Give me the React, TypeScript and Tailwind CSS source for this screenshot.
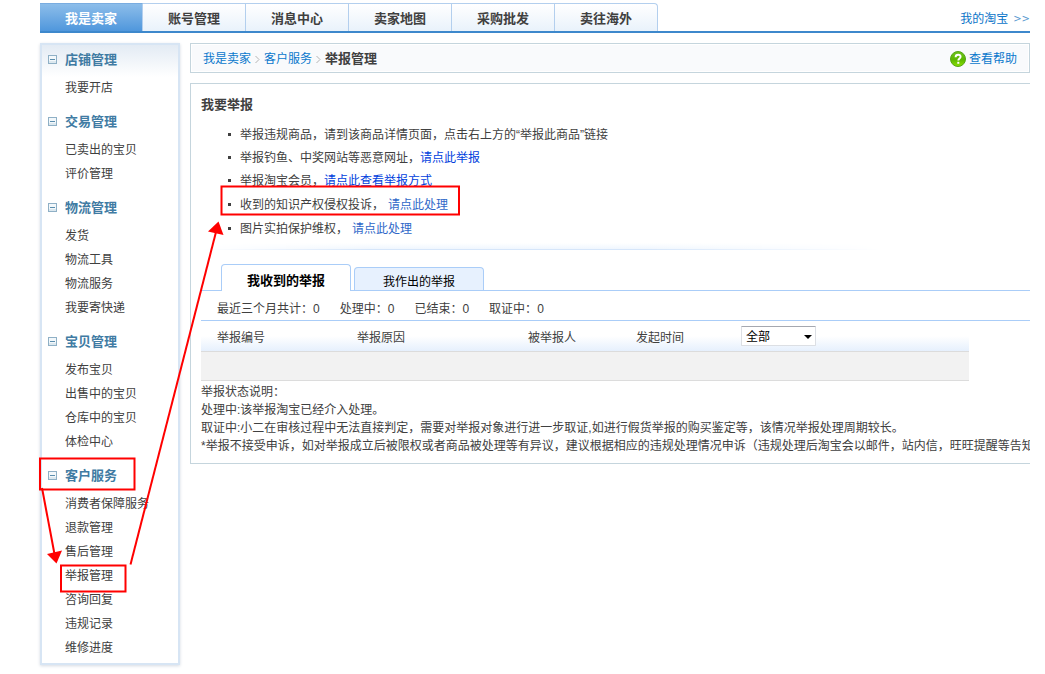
import React from "react";

const tabs = ["我是卖家", "账号管理", "消息中心", "卖家地图", "采购批发", "卖往海外"];

const menu: { title: string; items: string[] }[] = [
  { title: "店铺管理", items: ["我要开店"] },
  { title: "交易管理", items: ["已卖出的宝贝", "评价管理"] },
  { title: "物流管理", items: ["发货", "物流工具", "物流服务", "我要寄快递"] },
  { title: "宝贝管理", items: ["发布宝贝", "出售中的宝贝", "仓库中的宝贝", "体检中心"] },
  {
    title: "客户服务",
    items: ["消费者保障服务", "退款管理", "售后管理", "举报管理", "咨询回复", "违规记录", "维修进度"],
  },
];

const stats = [
  ["最近三个月共计：", "0"],
  ["处理中：", "0"],
  ["已结束：", "0"],
  ["取证中：", "0"],
];

function CollapseIcon() {
  return (
    <svg width="9" height="10" viewBox="0 0 9 10" shapeRendering="crispEdges" aria-hidden="true">
      <rect width="9" height="9" fill="#8fb0c6" />
      <rect x="1" y="1" width="7" height="7" fill="#f3f8fb" />
      <rect x="1" y="6" width="7" height="2" fill="#dce8ef" />
      <rect x="2" y="4" width="5" height="1" fill="#5b8eae" />
    </svg>
  );
}

function Separator() {
  return (
    <svg className="mx-1" width="5" height="9" viewBox="0 0 5 9" fill="none" stroke="#b4b4b4" aria-hidden="true">
      <path d="M0.5 1L4 4.5L0.5 8" />
    </svg>
  );
}

function HelpIcon() {
  return (
    <svg width="16" height="16" viewBox="0 0 16 16" fill="none" aria-hidden="true">
      <defs>
        <linearGradient id="help" x1="0" y1="0" x2="0" y2="1">
          <stop offset="0" stopColor="#6fc31c" />
          <stop offset="0.55" stopColor="#5cb800" />
          <stop offset="1" stopColor="#8be000" />
        </linearGradient>
      </defs>
      <circle cx="8" cy="8" r="7.5" fill="url(#help)" stroke="#55a516" />
      <path d="M5.6 6.2C5.6 4.6 6.6 3.7 8.1 3.7C9.6 3.7 10.6 4.6 10.6 5.8C10.6 7.6 8.3 7.6 8.3 9.6" stroke="#fff" strokeWidth="1.9" />
      <rect x="7.3" y="10.8" width="2" height="2" fill="#fff" />
    </svg>
  );
}

function Sidebar() {
  return (
    <aside className="w-[140px] shrink-0 border-2 border-[#d7e5f4] bg-linear-to-b from-[#e3ebf4] to-white bg-[length:100%_32px] bg-no-repeat pb-1 shadow-[0_1px_3px_#d5dbe3]">
      {menu.map((group) => (
        <section key={group.title} className="mb-2 last:mb-0">
          <h2 className="flex h-[30px] items-center gap-2 pl-[6px] text-[13px] font-bold text-[#407ba3]">
            <CollapseIcon />
            {group.title}
          </h2>
          <ul>
            {group.items.map((item) => (
              <li key={item} className="h-6 pl-[23px] leading-[26px]">
                <a href="#">{item}</a>
              </li>
            ))}
          </ul>
        </section>
      ))}
    </aside>
  );
}

function Bullet({ className, children }: { className: string; children: React.ReactNode }) {
  return (
    <li className={"flex items-center " + className}>
      <span className="mr-[9px] size-[3px] bg-[#404040]" />
      {children}
    </li>
  );
}

function Annotations() {
  return (
    <svg className="pointer-events-none absolute top-0 left-0" width="480" height="620" viewBox="0 0 480 620" fill="none" stroke="#f00" strokeWidth="2" aria-hidden="true">
      <rect x="40" y="458.5" width="94.5" height="31" />
      <rect x="61" y="565.5" width="64.5" height="26" />
      <rect x="221.5" y="186.5" width="237.5" height="28" />
      <path d="M42 488L54.5 554" />
      <path d="M130.5 564.5L216 232" />
      <path d="M56.5 563.5L47 554L62 550.5Z" fill="#f00" stroke="none" />
      <path d="M218.5 221.5L208 231.5L223.5 235Z" fill="#f00" stroke="none" />
    </svg>
  );
}

export default function App() {
  return (
    <div className="relative min-h-screen bg-white pt-[3px] pr-[15px] pb-2 pl-10 font-['Liberation_Sans','Noto_Sans_CJK_SC',sans-serif] text-[12px] text-[#404040]">
      <header className="flex h-[30px] items-stretch justify-between border-b-2 border-[#3d88cc]">
        <nav className="flex text-[13px] font-bold">
          {tabs.map((tab, i) => (
            <a
              key={tab}
              href="#"
              className={
                i === 0
                  ? "flex w-[103px] items-center justify-center border-t border-r border-t-[#79ace0] border-r-[#b3cfee] bg-linear-to-b from-[#8cbdea] to-[#4f97dc] pt-[3px] text-white"
                  : "flex w-[103px] items-center justify-center border-t border-r border-[#b3cfee] bg-linear-to-b from-white to-[#e9f2fb] pt-[3px] last:rounded-tr-sm"
              }
            >
              {tab}
            </a>
          ))}
        </nav>
        <a href="#" className="flex items-center gap-[5px] pt-[3px] text-[#0a74c8]">
          我的淘宝 <span className="font-['DejaVu_Sans'] text-[10px] text-[#5a9ad0]">&gt;&gt;</span>
        </a>
      </header>

      <div className="mt-[10px] flex items-start gap-[10px]">
        <Sidebar />

        <main className="min-w-0 flex-1">
          <div className="flex h-[30px] items-center border border-[#c5d5dd] bg-[#f9fafc] px-3 pt-[2px] shadow-[inset_0_0_0_1px_white]">
            <a href="#" className="text-[#0a78cc]">我是卖家</a>
            <Separator />
            <a href="#" className="text-[#0a78cc]">客户服务</a>
            <Separator />
            <span className="text-[13px] font-bold">举报管理</span>
            <a href="#" className="ml-auto flex items-center gap-[3px] text-[#0a78cc]">
              <HelpIcon />
              查看帮助
            </a>
          </div>

          <section className="mt-[10px] overflow-hidden border-y border-l border-[#c5d5dd] pt-[11px] pb-2 pl-[10px]">
            <h1 className="h-5 text-[13px] leading-5 font-bold">我要举报</h1>
            <ul className="mt-2 pl-[27px]">
              <Bullet className="h-[23px]">举报违规商品，请到该商品详情页面，点击右上方的“举报此商品”链接</Bullet>
              <Bullet className="h-[23px]">
                举报钓鱼、中奖网站等恶意网址，<a href="#" className="text-[#0040dd]">请点此举报</a>
              </Bullet>
              <Bullet className="h-[23px]">
                举报淘宝会员，<a href="#" className="text-[#0040dd]">请点此查看举报方式</a>
              </Bullet>
              <Bullet className="h-6 pt-px">
                收到的知识产权侵权投诉，<a href="#" className="ml-1 text-[#2e67c8]">请点此处理</a>
              </Bullet>
              <Bullet className="h-6 pt-px">
                图片实拍保护维权，<a href="#" className="ml-1 text-[#2e67c8]">请点此处理</a>
              </Bullet>
            </ul>

            <div className="mt-[3px] h-[7px] w-[680px] max-w-full border-b border-[#d6e6fa] bg-linear-to-b from-white to-[#f0f6fe] [mask-image:linear-gradient(90deg,transparent,black_25%,black_65%,transparent)]" />

            <div className="mt-[14px] flex items-end border-b border-[#aacdf8] pl-5 text-black">
              <button type="button" className="-mb-px h-[27px] w-[130px] rounded-t border border-b-0 border-[#aacdf8] bg-white pt-[6px] text-[13px] leading-5 font-bold">
                我收到的举报
              </button>
              <button type="button" className="ml-[3px] h-[23px] w-[130px] rounded-t border border-b-0 border-[#aacdf8] bg-[#e7f1fe] pt-[5px] leading-4">
                我作出的举报
              </button>
            </div>

            <div className="flex h-[30px] items-center gap-5 border-b border-[#aacdf8] pt-[6px] pl-4">
              {stats.map(([label, value]) => (
                <span key={label} className="whitespace-nowrap">
                  {label}
                  {value}
                </span>
              ))}
            </div>

            <div className="pr-[61px]">
              <table className="w-full table-fixed border-separate border-spacing-0 text-left">
                <thead>
                  <tr className="h-[30px] bg-linear-to-b from-white from-50% to-[#e6f0fd]">
                    <th className="w-[140px] p-0 pt-[3px] pl-4 font-normal">举报编号</th>
                    <th className="w-[171px] p-0 pt-[3px] pl-4 font-normal">举报原因</th>
                    <th className="w-[109px] p-0 pt-[3px] pl-4 font-normal">被举报人</th>
                    <th className="w-[120px] p-0 pt-[3px] pl-[15px] font-normal">发起时间</th>
                    <th className="p-0 font-normal">
                      <span className="relative flex w-[75px] items-center">
                        <select aria-label="举报状态" className="h-5 w-full appearance-none rounded-[1px] border border-[#dcdfe4] border-t-[#a5a8b0] bg-white pt-px pl-1 text-[12px] leading-[18px] text-black">
                          <option>全部</option>
                          <option>处理中</option>
                          <option>已结束</option>
                          <option>取证中</option>
                        </select>
                        <svg className="pointer-events-none absolute top-[9px] right-1" width="8" height="4" viewBox="0 0 8 4" aria-hidden="true">
                          <path d="M0 0H8L4 4Z" fill="#000" />
                        </svg>
                      </span>
                    </th>
                  </tr>
                </thead>
                <tbody>
                  <tr>
                    <td colSpan={5} className="h-[30px] border-y border-[#dcdcdc] bg-[#f2f2f2] p-0" />
                  </tr>
                </tbody>
              </table>
            </div>

            <div className="mt-[2px] leading-[18px] whitespace-nowrap">
              <p>举报状态说明：</p>
              <p>处理中:该举报淘宝已经介入处理。</p>
              <p>取证中:小二在审核过程中无法直接判定，需要对举报对象进行进一步取证,如进行假货举报的购买鉴定等，该情况举报处理周期较长。</p>
              <p>*举报不接受申诉，如对举报成立后被限权或者商品被处理等有异议，建议根据相应的违规处理情况申诉（违规处理后淘宝会以邮件，站内信，旺旺提醒等告知</p>
            </div>
          </section>
        </main>
      </div>

      <Annotations />
    </div>
  );
}
